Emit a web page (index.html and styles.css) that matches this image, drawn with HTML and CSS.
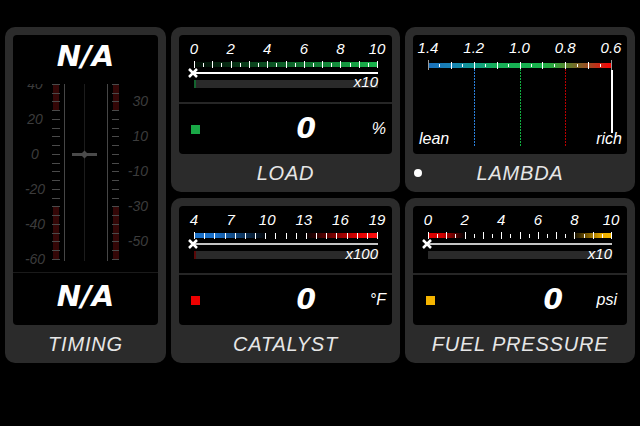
FILE: index.html
```html
<!DOCTYPE html>
<html lang="en">
<head>
    <meta charset="UTF-8">
    <meta name="viewport" content="width=device-width, initial-scale=1.0">
    <title>Engine Gauges</title>
    <link rel="stylesheet" href="styles.css">
</head>
<body>

    <div class="dash">

        <!-- Timing: vertical scale, no reading yet -->
        <section class="panel panel-timing">
            <div class="screen">
                <div class="na na-top">N/A</div>
                <svg class="timing-scale" width="145" height="188" viewBox="0 0 145 188">
                    <path class="zone" d="M40 0h6v26h-6zM40 122h6v54h-6zM100 0h6v26h-6zM100 122h6v54h-6z"/>
                    <path class="rail" d="M51.5 0v177M94.5 0v177"/>
                    <path class="rail-mid" d="M71.5 0v177"/>
                    <path class="timing-tick" d="M39 .5h8M39 9.5h8M39 17.5h8M39 26.5h8M39 35.5h8M39 44.5h8M39 52.5h8M39 61.5h8M39 70.5h8M39 79.5h8M39 87.5h8M39 96.5h8M39 105.5h8M39 114.5h8M39 122.5h8M39 131.5h8M39 140.5h8M39 149.5h8M39 157.5h8M39 166.5h8M39 175.5h8"/>
                    <path class="timing-tick" d="M99 .5h7M99 9.5h7M99 17.5h7M99 26.5h7M99 35.5h7M99 44.5h7M99 52.5h7M99 61.5h7M99 70.5h7M99 79.5h7M99 87.5h7M99 96.5h7M99 105.5h7M99 114.5h7M99 122.5h7M99 131.5h7M99 140.5h7M99 149.5h7M99 157.5h7M99 166.5h7M99 175.5h7"/>
                    <g class="timing-left">
                        <text x="22" y="5">40</text>
                        <text x="22" y="40">20</text>
                        <text x="22" y="75">0</text>
                        <text x="22" y="110">-20</text>
                        <text x="22" y="145">-40</text>
                        <text x="22" y="180">-60</text>
                    </g>
                    <g class="timing-right">
                        <text x="135" y="22">30</text>
                        <text x="135" y="57">10</text>
                        <text x="135" y="92">-10</text>
                        <text x="135" y="127">-30</text>
                        <text x="135" y="162">-50</text>
                    </g>
                    <rect class="pointer" x="59" y="69" width="25" height="3"/>
                    <path class="pointer" d="M71.5 66.5l4 4-4 4-4-4z"/>
                </svg>
                <div class="na na-bottom">N/A</div>
            </div>
            <div class="panel-label"><span class="label-text">TIMING</span></div>
        </section>

        <!-- Load -->
        <section class="panel">
            <div class="screen">
                <div class="scale">
                    <svg class="scale-svg" width="212" height="67" viewBox="0 0 212 67">
                        <defs>
                            <linearGradient id="grad-load">
                                <stop offset="0" stop-color="#19b44c" stop-opacity="0.08"/>
                                <stop offset="1" stop-color="#19b44c"/>
                            </linearGradient>
                        </defs>
                        <g transform="translate(15 0)">
                            <g class="scale-labels">
                                <text x="0" y="19">0</text>
                                <text x="36.6" y="19">2</text>
                                <text x="73.2" y="19">4</text>
                                <text x="109.8" y="19">6</text>
                                <text x="146.4" y="19">8</text>
                                <text x="183" y="19">10</text>
                            </g>
                            <rect x="0" y="27" width="184" height="5" fill="url(#grad-load)"/>
                            <path class="tick" d="M0.5 26v7M18.5 26v7M37.5 26v7M55.5 26v7M73.5 26v7M92.5 26v7M110.5 26v7M128.5 26v7M146.5 26v7M165.5 26v7M183.5 26v7"/>
                            <path class="tick" d="M9.5 28v4M27.5 28v4M46.5 28v4M64.5 28v4M82.5 28v4M101.5 28v4M119.5 28v4M137.5 28v4M156.5 28v4M174.5 28v4"/>
                            <rect class="baseline" x="0" y="37" width="184" height="2"/>
                            <rect class="track" x="0" y="45" width="184" height="8"/>
                            <rect x="0" y="45" width="2" height="8" fill="#13632e"/>
                            <path class="mark" d="M-5 34l8 8M3 34l-8 8"/>
                            <text class="scale-mult" x="184" y="52">x10</text>
                        </g>
                    </svg>
                </div>
                <div class="readout">
                    <span class="swatch swatch-green"></span>
                    <span class="readout-value">0</span>
                    <span class="readout-unit">%</span>
                </div>
            </div>
            <div class="panel-label"><span class="label-text">LOAD</span></div>
        </section>

        <!-- Lambda -->
        <section class="panel">
            <div class="screen">
                <svg class="scale-svg" width="214" height="119" viewBox="0 0 214 119">
                    <defs>
                        <linearGradient id="grad-lambda">
                            <stop offset="0" stop-color="#1b6fba"/>
                            <stop offset="0.14" stop-color="#1783b2"/>
                            <stop offset="0.25" stop-color="#0f9a8c"/>
                            <stop offset="0.36" stop-color="#16ad58"/>
                            <stop offset="0.6" stop-color="#18b24c"/>
                            <stop offset="0.68" stop-color="#2da540"/>
                            <stop offset="0.76" stop-color="#5d7c2a"/>
                            <stop offset="0.87" stop-color="#9c4a22"/>
                            <stop offset="0.95" stop-color="#d81c12"/>
                            <stop offset="1" stop-color="#ff0000"/>
                        </linearGradient>
                    </defs>
                    <g transform="translate(15 0)">
                        <g class="scale-labels">
                            <text x="0" y="18">1.4</text>
                            <text x="45.75" y="18">1.2</text>
                            <text x="91.5" y="18">1.0</text>
                            <text x="137.25" y="18">0.8</text>
                            <text x="183" y="18">0.6</text>
                        </g>
                        <rect x="0" y="28" width="184" height="5" fill="url(#grad-lambda)"/>
                        <path class="tick tick-end" d="M0.5 25v10M183.5 25v10"/>
                        <path class="tick" d="M23.5 27v7M46.5 27v7M69.5 27v7M92.5 27v7M114.5 27v7M137.5 27v7M160.5 27v7"/>
                        <path class="tick" d="M11.5 29v3M34.5 29v3M57.5 29v3M80.5 29v3M103.5 29v3M126.5 29v3M149.5 29v3M172.5 29v3"/>
                        <path class="ref ref-lean" d="M46.5 34v77"/>
                        <path class="ref ref-ideal" d="M92.5 34v77"/>
                        <path class="ref ref-rich" d="M137.5 34v77"/>
                    </g>
                    <text class="end-label" x="6" y="109">lean</text>
                    <text class="end-label scale-mult" x="209" y="109">rich</text>
                    <rect class="needle" x="198" y="35" width="2" height="63"/>
                </svg>
            </div>
            <div class="panel-label"><span class="led"></span><span class="label-text">LAMBDA</span></div>
        </section>

        <!-- Catalyst temperature -->
        <section class="panel">
            <div class="screen">
                <div class="scale">
                    <svg class="scale-svg" width="212" height="67" viewBox="0 0 212 67">
                        <defs>
                            <linearGradient id="grad-cat">
                                <stop offset="0" stop-color="#1a70c8"/>
                                <stop offset="0.12" stop-color="#1a70c8"/>
                                <stop offset="0.4" stop-color="#1a70c8" stop-opacity="0"/>
                                <stop offset="0.6" stop-color="#e60000" stop-opacity="0"/>
                                <stop offset="0.9" stop-color="#e60000"/>
                                <stop offset="1" stop-color="#ff1010"/>
                            </linearGradient>
                        </defs>
                        <g transform="translate(15 0)">
                            <g class="scale-labels">
                                <text x="0" y="19">4</text>
                                <text x="36.6" y="19">7</text>
                                <text x="73.2" y="19">10</text>
                                <text x="109.8" y="19">13</text>
                                <text x="146.4" y="19">16</text>
                                <text x="183" y="19">19</text>
                            </g>
                            <rect x="0" y="27" width="184" height="5" fill="url(#grad-cat)"/>
                            <path class="tick" d="M0.5 26v7M10.5 27v6M20.5 27v6M31.5 27v6M41.5 27v6M51.5 27v6M61.5 27v6M71.5 27v6M81.5 27v6M92.5 27v6M102.5 27v6M112.5 27v6M122.5 27v6M132.5 27v6M142.5 27v6M153.5 27v6M163.5 27v6M173.5 27v6M183.5 26v7"/>
                            <rect class="baseline baseline-dim" x="0" y="37" width="184" height="2"/>
                            <rect class="track" x="0" y="45" width="184" height="8"/>
                            <rect x="0" y="45" width="2" height="8" fill="#5a0808"/>
                            <path class="mark" d="M-5 34l8 8M3 34l-8 8"/>
                            <text class="scale-mult" x="184" y="53">x100</text>
                        </g>
                    </svg>
                </div>
                <div class="readout">
                    <span class="swatch swatch-red"></span>
                    <span class="readout-value">0</span>
                    <span class="readout-unit">°F</span>
                </div>
            </div>
            <div class="panel-label"><span class="label-text">CATALYST</span></div>
        </section>

        <!-- Fuel pressure -->
        <section class="panel">
            <div class="screen">
                <div class="scale">
                    <svg class="scale-svg" width="214" height="67" viewBox="0 0 214 67">
                        <defs>
                            <linearGradient id="grad-fuel">
                                <stop offset="0" stop-color="#e00000"/>
                                <stop offset="0.08" stop-color="#d00000"/>
                                <stop offset="0.2" stop-color="#d00000" stop-opacity="0"/>
                                <stop offset="0.78" stop-color="#f0b000" stop-opacity="0"/>
                                <stop offset="0.95" stop-color="#f0b000"/>
                                <stop offset="1" stop-color="#f5ba00"/>
                            </linearGradient>
                        </defs>
                        <g transform="translate(15 0)">
                            <g class="scale-labels">
                                <text x="0" y="19">0</text>
                                <text x="36.6" y="19">2</text>
                                <text x="73.2" y="19">4</text>
                                <text x="109.8" y="19">6</text>
                                <text x="146.4" y="19">8</text>
                                <text x="183" y="19">10</text>
                            </g>
                            <rect x="0" y="27" width="184" height="5" fill="url(#grad-fuel)"/>
                            <path class="tick" d="M0.5 26v7M18.5 26v7M37.5 26v7M55.5 26v7M73.5 26v7M92.5 26v7M110.5 26v7M128.5 26v7M146.5 26v7M165.5 26v7M183.5 26v7"/>
                            <path class="tick" d="M9.5 28v4M27.5 28v4M46.5 28v4M64.5 28v4M82.5 28v4M101.5 28v4M119.5 28v4M137.5 28v4M156.5 28v4M174.5 28v4"/>
                            <rect class="baseline baseline-dim" x="0" y="37" width="184" height="2"/>
                            <rect class="track" x="0" y="45" width="184" height="8"/>
                            <path class="mark" d="M-5 34l8 8M3 34l-8 8"/>
                            <text class="scale-mult" x="184" y="53">x10</text>
                        </g>
                    </svg>
                </div>
                <div class="readout readout-psi">
                    <span class="swatch swatch-amber"></span>
                    <span class="readout-value">0</span>
                    <span class="readout-unit">psi</span>
                </div>
            </div>
            <div class="panel-label"><span class="label-text">FUEL PRESSURE</span></div>
        </section>

    </div>

</body>
</html>
```

FILE: styles.css
```css
body {
    margin: 0;
    background-color: #000;
    font-family: "Liberation Sans", Arial, sans-serif;
    color: #fff;
}

.dash {
    display: grid;
    grid-template-columns: 161px 229px 230px;
    grid-template-rows: 165px 165px;
    column-gap: 5px;
    row-gap: 6px;
    padding: 27px 5px 0;
}

/* Panel frame */
.panel {
    display: flex;
    flex-direction: column;
    background-color: #2b2b2b;
    border-radius: 10px;
    padding: 8px 8px 0;
}

.panel-timing {
    grid-row: span 2;
}

.screen {
    flex: 1;
    display: flex;
    flex-direction: column;
    background-color: #000;
    border-radius: 4px;
    overflow: hidden;
}

.panel-label {
    height: 38px;
    display: grid;
    grid-template-columns: 1fr auto 1fr;
    align-items: center;
    font-size: 20px;
    font-style: italic;
    letter-spacing: 0.8px;
    color: #e6e6e6;
}

.label-text {
    grid-column: 2;
    grid-row: 1;
}

.led {
    grid-column: 1;
    grid-row: 1;
    width: 8px;
    height: 8px;
    margin-left: 1px;
    border-radius: 50%;
    background-color: #fff;
}

/* Horizontal scales */
.scale {
    height: 67px;
    border-bottom: 2px solid #262626;
}

.scale-svg {
    display: block;
}

.scale-svg text {
    font-size: 15px;
    font-style: italic;
    fill: #fff;
}

.scale-labels text {
    text-anchor: middle;
}

.scale-svg .scale-mult {
    text-anchor: end;
}

.scale-svg .end-label {
    font-size: 16px;
}

.tick {
    stroke: #fff;
    stroke-width: 1;
}

.tick-end {
    stroke: #9a9a9a;
}

.baseline {
    fill: #fff;
}

.baseline-dim {
    fill: #c4c4c4;
}

.track {
    fill: #2a2a2a;
}

.mark {
    stroke: #fff;
    stroke-width: 2.5;
    fill: none;
}

.ref {
    stroke-width: 1;
    stroke-dasharray: 2 1;
}

.ref-lean { stroke: #2a80dc; }
.ref-ideal { stroke: #10b040; }
.ref-rich { stroke: #b80000; }

.needle {
    fill: #fff;
}

/* Digital readout row */
.readout {
    flex: 1;
    display: grid;
    grid-template-columns: 9px 1fr 70px;
    align-items: center;
    padding: 0 6px 0 12px;
}

.readout-psi {
    grid-template-columns: 9px 1fr 54px;
    padding: 0 10px 0 13px;
}

.swatch {
    width: 9px;
    height: 9px;
}

.swatch-green { background-color: #19a846; }
.swatch-red { background-color: #ee0000; }
.swatch-amber { background-color: #f5b400; }

.readout-value {
    text-align: right;
    font-family: "DejaVu Sans", sans-serif;
    font-size: 28px;
    line-height: 28px;
    font-weight: bold;
    font-style: italic;
}

.readout-unit {
    text-align: right;
    font-size: 16px;
    font-style: italic;
}

/* Timing */
.na {
    text-align: center;
    font-family: "DejaVu Sans", sans-serif;
    font-size: 29px;
    font-weight: bold;
    font-style: italic;
}

.na-top {
    height: 49px;
    line-height: 42px;
}

.na-bottom {
    flex: 1;
    line-height: 47px;
    border-top: 1px solid #1a1a1a;
}

.timing-scale {
    display: block;
}

.timing-scale text {
    font-size: 14px;
    font-style: italic;
    fill: #3c3c3c;
}

.timing-left text {
    text-anchor: middle;
}

.timing-right text {
    text-anchor: end;
}

.zone {
    fill: #340707;
}

.rail {
    stroke: #464646;
    stroke-width: 1;
}

.rail-mid {
    stroke: #1c1c1c;
    stroke-width: 1;
}

.timing-tick {
    stroke: #4a4a4a;
    stroke-width: 1;
}

.pointer {
    fill: #4a4a4a;
}
```
